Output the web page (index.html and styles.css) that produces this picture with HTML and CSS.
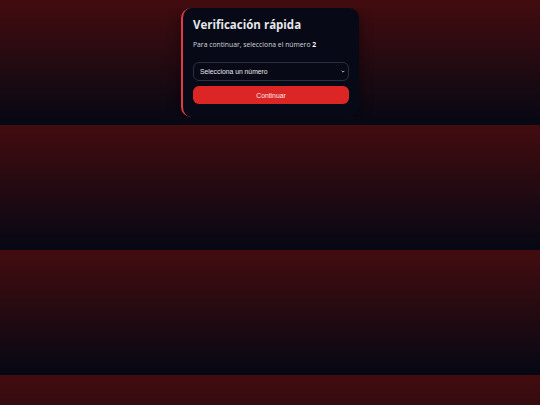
FILE: index.html
```html
<!DOCTYPE html>
<html lang="es">
<head>
<meta charset="utf-8">
<title>Verificación rápida</title>
<link rel="stylesheet" href="styles.css">
</head>
<body>
<div class="card">
  <h1 class="title">Verificación rápida</h1>
  <p class="desc">Para continuar, selecciona el número <strong>2</strong></p>
  <select class="pick">
    <option>Selecciona un número</option>
    <option>1</option>
    <option>2</option>
    <option>3</option>
  </select>
  <button class="btn">Continuar</button>
</div>
</body>
</html>
```
FILE: styles.css
```css
body {
  margin: 8px;
  background: linear-gradient(to bottom, #430c0f, #050814);
  font-family: "Open Sans", "Noto Sans", sans-serif;
  color: #e5e7eb;
}
.card {
  box-sizing: border-box;
  width: 178px;
  margin: 0 auto;
  padding: 9px 10px 13px 10px;
  background: #070a16;
  border-left: 2px solid #e23a44;
  border-radius: 10px;
  box-shadow: 0 4px 14px rgba(0, 0, 0, 0.45);
  display: flex;
  flex-direction: column;
}
.title {
  margin: 0;
  font-size: 11.5px;
  font-weight: 700;
  color: #e5e7eb;
  line-height: 16px;
}
.desc {
  margin: 7px 0 0 0;
  font-size: 6.8px;
  line-height: 10px;
  color: #d1d5db;
}
.desc strong {
  color: #f3f4f6;
}
.pick {
  appearance: none;
  -webkit-appearance: none;
  margin-top: 12px;
  height: 19px;
  padding: 0 12px 0 6px;
  background-color: #070a16;
  background-image: url("data:image/svg+xml;utf8,<svg xmlns='http://www.w3.org/2000/svg' width='6' height='4' viewBox='0 0 6 4'><path d='M1 1l2 2 2-2' fill='none' stroke='%23e5e7eb' stroke-width='1.2'/></svg>");
  background-repeat: no-repeat;
  background-position: right 3px center;
  background-size: 4px 3px;
  color: #e5e7eb;
  border: 1px solid #2a3040;
  border-radius: 6px;
  font-family: "Liberation Sans", Arial, sans-serif;
  font-size: 6.8px;
}
.btn {
  margin-top: 5px;
  height: 18px;
  background: #dc2626;
  color: #fde8e8;
  border: none;
  border-radius: 6px;
  font-family: "Liberation Sans", Arial, sans-serif;
  font-size: 6.8px;
}
```
